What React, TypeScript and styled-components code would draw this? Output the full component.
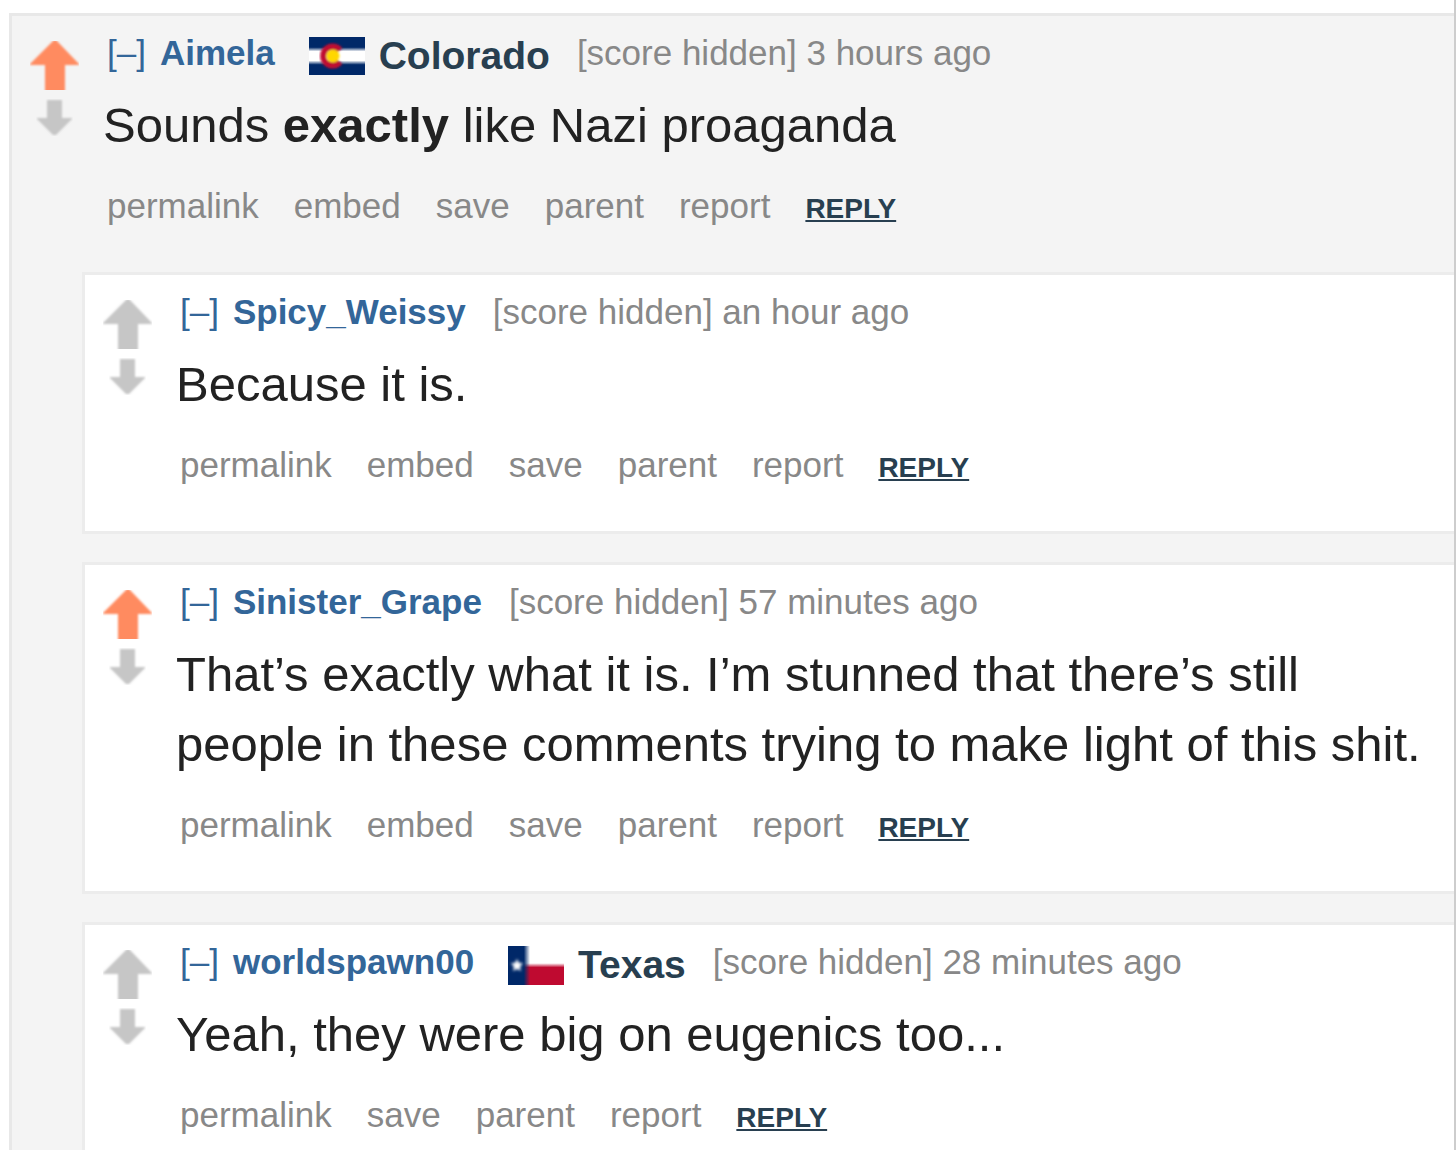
import React from "react";
import styled, { createGlobalStyle } from "styled-components";

const GlobalStyle = createGlobalStyle`
  *, *::before, *::after { box-sizing: border-box; }
  body {
    margin: 0;
    background: #fff;
    font-family: "Liberation Sans", Arial, sans-serif;
  }
`;

const Page = styled.main`
  min-height: 100vh;
  padding: 13px 0 0 9px;
  border-right: 2px solid #cdcdcd;
  overflow: hidden;
`;

const Comment = styled.article<{ $nested?: boolean }>`
  border: 3px solid ${(p) => (p.$nested ? "#ececec" : "#e8e8e8")};
  border-right: 0;
  background: ${(p) => (p.$nested ? "#fff" : "#f4f4f4")};
`;

const Entry = styled.div`
  display: flex;
  gap: 24px;
  padding: 17px 18px 43px;
`;

const Votes = styled.div`
  display: flex;
  flex: none;
  flex-direction: column;
  align-items: center;
  gap: 9px;
  width: 49px;
  padding-top: 8px;
`;

const VoteButton = styled.button`
  display: block;
  padding: 0;
  border: 0;
  background: none;
  cursor: pointer;

  svg { display: block; }
`;

const Content = styled.div`
  flex: 1;
  min-width: 0;
`;

const Tagline = styled.header`
  display: flex;
  align-items: flex-start;
  height: 46px;
  padding-left: 4px;
  font-size: 35px;
  line-height: 40px;
  white-space: nowrap;
`;

const Collapse = styled.a`
  margin-right: 14px;
  color: #369;
  text-decoration: none;
`;

const Author = styled.a`
  color: #369;
  font-weight: bold;
  text-decoration: none;
`;

const Flair = styled.span`
  display: flex;
  align-items: center;
  gap: 14px;
  margin-left: 34px;
  color: #283f50;
  font-size: 39px;
  font-weight: bold;
  line-height: 46px;

  svg { display: block; flex: none; }
`;

const Meta = styled.span`
  margin-left: 27px;
  color: #888;
`;

const Body = styled.p`
  margin: 11px 0 26px;
  color: #222;
  font-size: 49px;
  line-height: 70px;
`;

const Actions = styled.ul`
  display: flex;
  align-items: baseline;
  gap: 35px;
  margin: 0;
  padding: 0 0 0 4px;
  font-size: 35px;
  line-height: 40px;
  list-style: none;
`;

const ActionLink = styled.a`
  color: #888;
  text-decoration: none;
`;

const ReplyLink = styled.a`
  color: #283f50;
  font-size: 28px;
  font-weight: bold;
  text-decoration: underline;
`;

const Replies = styled.section`
  display: flex;
  flex-direction: column;
  gap: 28px;
  padding: 0 0 28px 70px;
`;

function UpArrow({ active }: { active?: boolean }) {
  return (
    <svg width="49" height="49" viewBox="0 0 49 49" aria-hidden="true">
      <defs>
        <filter id="soften">
          <feGaussianBlur stdDeviation="1" />
        </filter>
      </defs>
      <path
        d="M24 -1H26L49 23V24H35V54H15V24H0V23Z"
        fill={active ? "#ff8b60" : "#c6c6c6"}
        filter="url(#soften)"
      />
    </svg>
  );
}

function DownArrow() {
  return (
    <svg width="37" height="37" viewBox="0 0 37 37" aria-hidden="true">
      <path
        d="M11 1H26V19H36V20L20 36H17L1 20V19H11Z"
        fill="#c6c6c6"
        filter="url(#soften)"
      />
    </svg>
  );
}

function ColoradoFlag() {
  return (
    <svg width="56" height="38" viewBox="0 0 56 38" aria-hidden="true">
      <defs>
        <filter id="flagSoft" x="-20%" y="-20%" width="140%" height="140%">
          <feGaussianBlur stdDeviation="1" />
        </filter>
        <linearGradient id="stripes" x1="0" y1="0" x2="0" y2="1">
          <stop offset="0.27" stopColor="#002868" />
          <stop offset="0.38" stopColor="#fff" />
          <stop offset="0.62" stopColor="#fff" />
          <stop offset="0.73" stopColor="#002868" />
        </linearGradient>
      </defs>
      <rect width="56" height="38" fill="url(#stripes)" />
      <g filter="url(#flagSoft)">
        <path
          d="M31 13A9.500 9.500 0 1 0 31 25"
          fill="none"
          stroke="#bf0a30"
          strokeWidth="6"
        />
        <circle cx="24" cy="19" r="6.500" fill="#ffd700" />
      </g>
    </svg>
  );
}

function TexasFlag() {
  return (
    <svg width="56" height="39" viewBox="0 0 56 39" aria-hidden="true">
      <defs>
        <linearGradient id="field" x1="0" y1="0" x2="0" y2="1">
          <stop offset="0.44" stopColor="#fff" />
          <stop offset="0.55" stopColor="#bf0a30" />
        </linearGradient>
        <linearGradient id="hoist" x1="0" y1="0" x2="1" y2="0">
          <stop offset="0.72" stopColor="#002868" />
          <stop offset="1" stopColor="#002868" stopOpacity="0" />
        </linearGradient>
        <filter id="starSoft" x="-50%" y="-50%" width="200%" height="200%">
          <feGaussianBlur stdDeviation="1.4" />
        </filter>
      </defs>
      <rect width="56" height="39" fill="url(#field)" />
      <rect width="22" height="39" fill="url(#hoist)" />
      <path
        d="M9 13L11 17H15L12 21L13 25L9 23L5 25L6 21L3 17H7Z"
        fill="#fff"
        filter="url(#starSoft)"
      />
    </svg>
  );
}

type CommentData = {
  author: string;
  flair?: { name: string; flag: React.ReactNode };
  age: string;
  upvoted?: boolean;
  body: React.ReactNode;
  actions: string[];
};

const ALL_ACTIONS = ["permalink", "embed", "save", "parent", "report"];

const ROOT: CommentData = {
  author: "Aimela",
  flair: { name: "Colorado", flag: <ColoradoFlag /> },
  age: "3 hours ago",
  upvoted: true,
  body: (
    <>
      Sounds <strong>exactly</strong> like Nazi proaganda
    </>
  ),
  actions: ALL_ACTIONS,
};

const REPLIES: CommentData[] = [
  {
    author: "Spicy_Weissy",
    age: "an hour ago",
    body: "Because it is.",
    actions: ALL_ACTIONS,
  },
  {
    author: "Sinister_Grape",
    age: "57 minutes ago",
    upvoted: true,
    body: "That’s exactly what it is. I’m stunned that there’s still people in these comments trying to make light of this shit.",
    actions: ALL_ACTIONS,
  },
  {
    author: "worldspawn00",
    flair: { name: "Texas", flag: <TexasFlag /> },
    age: "28 minutes ago",
    body: "Yeah, they were big on eugenics too...",
    actions: ["permalink", "save", "parent", "report"],
  },
];

function CommentEntry({ data }: { data: CommentData }) {
  return (
    <Entry>
      <Votes>
        <VoteButton type="button" aria-label="upvote" aria-pressed={!!data.upvoted}>
          <UpArrow active={data.upvoted} />
        </VoteButton>
        <VoteButton type="button" aria-label="downvote">
          <DownArrow />
        </VoteButton>
      </Votes>
      <Content>
        <Tagline>
          <Collapse href="#collapse">[–]</Collapse>
          <Author href={`#${data.author}`}>{data.author}</Author>
          {data.flair && (
            <Flair>
              {data.flair.flag}
              {data.flair.name}
            </Flair>
          )}
          <Meta>[score hidden] {data.age}</Meta>
        </Tagline>
        <Body>{data.body}</Body>
        <Actions>
          {data.actions.map((action) => (
            <li key={action}>
              <ActionLink href={`#${action}`}>{action}</ActionLink>
            </li>
          ))}
          <li>
            <ReplyLink href="#reply">REPLY</ReplyLink>
          </li>
        </Actions>
      </Content>
    </Entry>
  );
}

export default function App() {
  return (
    <>
      <GlobalStyle />
      <Page>
        <Comment>
          <CommentEntry data={ROOT} />
          <Replies>
            {REPLIES.map((reply) => (
              <Comment $nested key={reply.author}>
                <CommentEntry data={reply} />
              </Comment>
            ))}
          </Replies>
        </Comment>
      </Page>
    </>
  );
}
